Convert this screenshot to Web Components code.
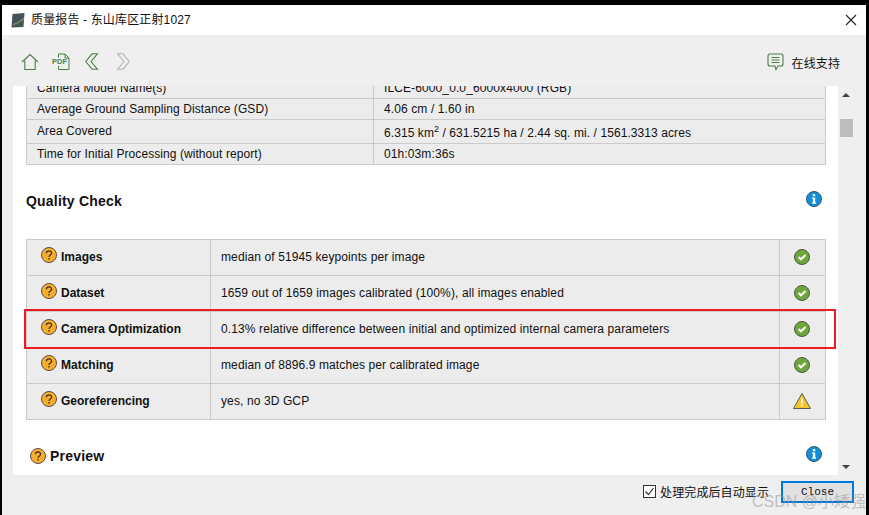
<!DOCTYPE html>
<html>
<head>
<meta charset="utf-8">
<style>
  html, body { margin: 0; padding: 0; background: #000; overflow: hidden; }
  body { font-family: "Liberation Sans", "Noto Sans CJK SC", sans-serif; }
</style>
</head>
<body>
<template id="report-window-tpl">
  <style>
    :host { display: flex; flex-direction: column; width: 864px; height: 510px; margin: 5px 0 0 2px; background: #efefef; position: relative; overflow: hidden; }
    .red { position: absolute; left: 22px; top: 304px; width: 808px; height: 36px; border: 2px solid #ed1c24; pointer-events: none; }
    .mark { position: absolute; left: 750px; top: 483px; font: 16px "Liberation Sans", "Noto Sans CJK SC", sans-serif; color: rgba(150,150,150,.55); white-space: nowrap; }
  </style>
  <slot></slot>
  <div class="red"></div>
  <div class="mark">CSDN @小矮强</div>
</template>

<template id="title-bar-tpl">
  <style>
    :host { display: flex; align-items: center; height: 30px; background: #fff; padding: 0 9px 0 9px; box-sizing: border-box; font-size: 12px; color: #111; flex: none; }
    svg { display: block; }
    .t { margin-left: 6px; flex: 1; letter-spacing: .15px; padding-bottom: 3px; }
    .x { margin-bottom: 1px; }
  </style>
  <svg width="14" height="15" viewBox="0 0 14 15"><path d="M1.500 1 13.500 0 12.500 14 .5 14.500Z" fill="#46545a"/><path d="M2 11 8 8 13 4V7L8 10 2 13Z" fill="#7d9468" opacity=".7"/></svg>
  <span class="t"><slot></slot></span>
  <svg class="x" width="12" height="12" viewBox="0 0 12 12"><path d="M1 1 11 11M11 1 1 11" stroke="#222" stroke-width="1.100" fill="none"/></svg>
</template>

<template id="tool-bar-tpl">
  <style>
    :host { display: flex; align-items: center; height: 51px; padding: 2px 26px 0 19px; box-sizing: border-box; flex: none; font-size: 12px; color: #111; }
    svg { display: block; flex: none; }
    .sp { flex: 1; }
    .help { margin-left: 8px; letter-spacing: .1px; padding-top: 2px; }
    .pdf { margin-left: 13px; }
    .back { margin-left: 15px; }
    .fwd { margin-left: 17px; }
  </style>
  <svg width="18" height="18" viewBox="0 0 18 18" fill="none" stroke="#4c7f45" stroke-width="1.100"><path d="M1 9 9 1.500 17 9M3.800 7.500V16.500H14.200V7.500"/></svg>
  <svg class="pdf" width="18" height="17" viewBox="0 0 18 17" fill="none" stroke="#4c7f45"><path d="M6.500 4.500V1H13L17 5V16.500H6.500V13M13 1V5H17"/><text x="0" y="11" font-family="Liberation Sans" font-size="7.500" font-weight="700" fill="#4c7f45" stroke="none">PDF</text></svg>
  <svg class="back" width="14" height="17" viewBox="0 0 14 17" fill="none" stroke="#4c7f45" stroke-width="1.100"><path d="M7 .8H12.500L6 8.500 12.500 16.200H7L.8 8.500Z"/></svg>
  <svg class="fwd" width="14" height="17" viewBox="0 0 14 17" fill="none" stroke="#b4b4b4" stroke-width="1.100"><path d="M7 .8H1.500L8 8.500 1.500 16.200H7L13.200 8.500Z"/></svg>
  <div class="sp"></div>
  <svg width="17" height="18" viewBox="0 0 17 18" fill="none" stroke="#4c7f45" stroke-width="1.100"><path d="M3 1H14Q16 1 16 3V11Q16 13 14 13H11L9 16.500 8 13H3Q1 13 1 11V3Q1 1 3 1Z"/><path d="M4.500 4.500H12.500M4.500 7H12.500M4.500 9.500H12.500"/></svg>
  <span class="help"><slot></slot></span>
</template>

<template id="report-panel-tpl">
  <style>
    :host { display: flex; height: 389px; margin-left: 11px; flex: none; }
    .page { width: 825px; background: #fff; overflow: hidden; padding: 0 12px 0 13px; box-sizing: border-box; }
    .bar { width: 16px; position: relative; display: flex; flex-direction: column; align-items: center; padding-top: 7px; box-sizing: border-box; }
    .up { width: 0; height: 0; border: 4px solid transparent; border-top: 0; border-bottom: 4px solid #444; }
    .thumb { width: 13px; height: 18px; background: #bdbdbd; margin-top: 22px; }
    .sp { flex: 1; }
    .down { width: 0; height: 0; border: 4px solid transparent; border-bottom: 0; border-top: 4px solid #444; margin-bottom: 6px; }
  </style>
  <div class="page"><slot></slot></div>
  <div class="bar"><div class="up"></div><div class="thumb"></div><div class="sp"></div><div class="down"></div></div>
</template>

<template id="info-table-tpl">
  <style>
    :host { display: block; margin-top: -9px; border: solid #cbcbcb; border-width: 0 1px 1px 1px; width: 800px; box-sizing: border-box; background: #ececec; }
  </style>
  <slot></slot>
</template>

<template id="info-row-tpl">
  <style>
    :host { display: grid; grid-template-columns: 346px 1fr; font-size: 12px; color: #111; letter-spacing: .07px; border-top: 1px solid #cbcbcb; box-sizing: border-box; }
    :host([first]) { border-top: 0; }
    div { padding: 0 0 0 10px; display: flex; align-items: center; white-space: nowrap; height: 100%; }
    .v { border-left: 1px solid #cbcbcb; letter-spacing: .11px; }
    ::slotted(sup) { font-size: 9px; line-height: 0; }
  </style>
  <div><slot name="k"></slot></div>
  <div class="v"><span part="value"><slot></slot></span></div>
</template>

<template id="section-head-tpl">
  <style>
    :host { display: flex; align-items: center; font-weight: 700; color: #111; font-size: 14px; letter-spacing: .2px; }
    .sp { flex: 1; }
    .label { display: flex; align-items: center; gap: 4px; }
    .end { margin-right: 4px; display: block; position: relative; top: -2px; }
  </style>
  <div class="label"><slot name="help"></slot><span><slot></slot></span></div>
  <div class="sp"></div>
  <status-icon class="end" kind="info"></status-icon>
</template>

<template id="quality-table-tpl">
  <style>
    :host { display: block; border: solid #cbcbcb; border-width: 0 1px 1px 1px; width: 800px; box-sizing: border-box; background: #ececec; }
  </style>
  <slot></slot>
</template>

<template id="quality-row-tpl">
  <style>
    :host { display: grid; grid-template-columns: 183px 1fr 46px; height: 36px; border-top: 1px solid #cbcbcb; box-sizing: border-box; font-size: 12px; color: #111; letter-spacing: .11px; }
    .k { display: flex; align-items: center; padding: 0 0 2px 14px; gap: 4px; font-weight: 700; letter-spacing: 0; }
    .k status-icon { position: relative; top: -2px; }
    .v { display: flex; align-items: center; padding: 0 0 2px 10px; border-left: 1px solid #cbcbcb; white-space: nowrap; }
    .s { display: flex; align-items: center; justify-content: center; padding: 0 2px 2px 0; border-left: 1px solid #cbcbcb; }
  </style>
  <div class="k"><status-icon kind="help"></status-icon><span><slot name="k"></slot></span></div>
  <div class="v"><slot></slot></div>
  <div class="s"><status-icon id="st"></status-icon></div>
</template>

<template id="foot-bar-tpl">
  <style>
    :host { display: flex; align-items: center; justify-content: flex-end; height: 35px; padding: 0 12px 3px 0; box-sizing: border-box; flex: none; font-size: 12px; color: #111; }
    .box { width: 11px; height: 11px; border: 1px solid #333; background: #fff; margin-right: 4px; display: block; }
    .box svg { display: block; }
    .txt { margin-right: 12px; letter-spacing: .1px; }
    .btn { width: 73px; height: 22px; margin-top: 2px; border: 2px solid #0078d7; background: #e1e1e1; box-sizing: border-box; display: flex; align-items: center; justify-content: center; font: 11px "Liberation Mono", monospace; color: #111; }
  </style>
  <span class="box"><svg width="11" height="11" viewBox="0 0 11 11"><path d="M1.500 5.500 4.500 8.500 9.500 2" fill="none" stroke="#333" stroke-width="1.200"/></svg></span>
  <span class="txt"><slot></slot></span>
  <div class="btn">Close</div>
</template>

<template id="status-icon-tpl">
  <style>
    :host { display: inline-block; width: 16px; height: 16px; flex: none; }
    svg { display: block; overflow: visible; }
  </style>
  <svg width="16" height="16" viewBox="0 0 16 16"></svg>
</template>

<report-window>
  <title-bar>质量报告 - 东山库区正射1027</title-bar>
  <tool-bar>在线支持</tool-bar>
  <report-panel>
    <info-table>
      <info-row first style="height:21px"><span slot="k">Camera Model Name(s)</span>ILCE-6000_0.0_6000x4000 (RGB)</info-row>
      <info-row style="height:21px"><span slot="k">Average Ground Sampling Distance (GSD)</span>4.06 cm / 1.60 in</info-row>
      <info-row style="height:24px"><span slot="k" style="margin-bottom:2px">Area Covered</span><span style="display:inline-block;margin-top:2px;letter-spacing:.08px">6.315 km<sup style="font-size:9px;line-height:0">2</sup> / 631.5215 ha / 2.44 sq. mi. / 1561.3313 acres</span></info-row>
      <info-row style="height:21px"><span slot="k">Time for Initial Processing (without report)</span>01h:03m:36s</info-row>
    </info-table>
    <section-head style="margin-top:26px;height:20px">Quality Check</section-head>
    <quality-table style="margin-top:28px">
      <quality-row status="ok"><span slot="k">Images</span>median of 51945 keypoints per image</quality-row>
      <quality-row status="ok"><span slot="k">Dataset</span>1659 out of 1659 images calibrated (100%), all images enabled</quality-row>
      <quality-row status="ok"><span slot="k">Camera Optimization</span>0.13% relative difference between initial and optimized internal camera parameters</quality-row>
      <quality-row status="ok"><span slot="k">Matching</span>median of 8896.9 matches per calibrated image</quality-row>
      <quality-row status="warn"><span slot="k">Georeferencing</span>yes, no 3D GCP</quality-row>
    </quality-table>
    <section-head style="margin-top:26px;height:20px"><status-icon slot="help" kind="help" style="margin-left:4px"></status-icon>Preview</section-head>
  </report-panel>
  <foot-bar>处理完成后自动显示</foot-bar>
</report-window>

<script>
const ICONS = {
  help: '<circle cx="8" cy="8" r="7.500" fill="#f9ae2b" stroke="#5a5040"/><path d="M5.400 6.200C5.400 3.200 10.600 3.200 10.600 6.100 10.600 8 8 8 8 10" fill="none" stroke="#3a3020" stroke-width="1.300"/><rect x="7.300" y="11" width="1.400" height="1.500" fill="#3a3020"/>',
  info: '<circle cx="8" cy="8" r="7.500" fill="#0f8fdc" stroke="#3c5260"/><rect x="6.800" y="3" width="2.400" height="2.200" fill="#fff"/><path d="M6 6.500H9.200V11.500H10V12.800H6V11.500H6.900V7.700H6Z" fill="#fff"/>',
  ok: '<circle cx="8" cy="8" r="7.500" fill="#6ea63a" stroke="#4a5a44"/><path d="M4.500 8 7 10.300 11.500 6" fill="none" stroke="#fff" stroke-width="2"/>',
  warn: '<path d="M8 .5 16.500 15.500H-.5Z" fill="#f2c62c" stroke="#5a5a50" stroke-linejoin="round"/><rect x="7.200" y="5" width="1.600" height="5.500" fill="#fff"/><rect x="7.200" y="11.500" width="1.600" height="1.700" fill="#fff"/>'
}

function simple(name) {
  customElements.define(name, class extends HTMLElement {
    constructor() {
      super()
      this.attachShadow({ mode: 'open' })
        .appendChild(document.getElementById(name + '-tpl').content.cloneNode(true))
    }
  })
}

customElements.define('status-icon', class extends HTMLElement {
  constructor() {
    super()
    this.attachShadow({ mode: 'open' })
      .appendChild(document.getElementById('status-icon-tpl').content.cloneNode(true))
  }
  static get observedAttributes() { return ['kind'] }
  attributeChangedCallback() {
    this.shadowRoot.querySelector('svg').innerHTML = ICONS[this.getAttribute('kind')] || ''
  }
})

customElements.define('quality-row', class extends HTMLElement {
  constructor() {
    super()
    this.attachShadow({ mode: 'open' })
      .appendChild(document.getElementById('quality-row-tpl').content.cloneNode(true))
  }
  connectedCallback() {
    this.shadowRoot.getElementById('st').setAttribute('kind', this.getAttribute('status'))
  }
})

;['report-window', 'title-bar', 'tool-bar', 'report-panel', 'info-table', 'info-row', 'section-head', 'quality-table', 'foot-bar'].forEach(simple)
</script>
</body>
</html>
